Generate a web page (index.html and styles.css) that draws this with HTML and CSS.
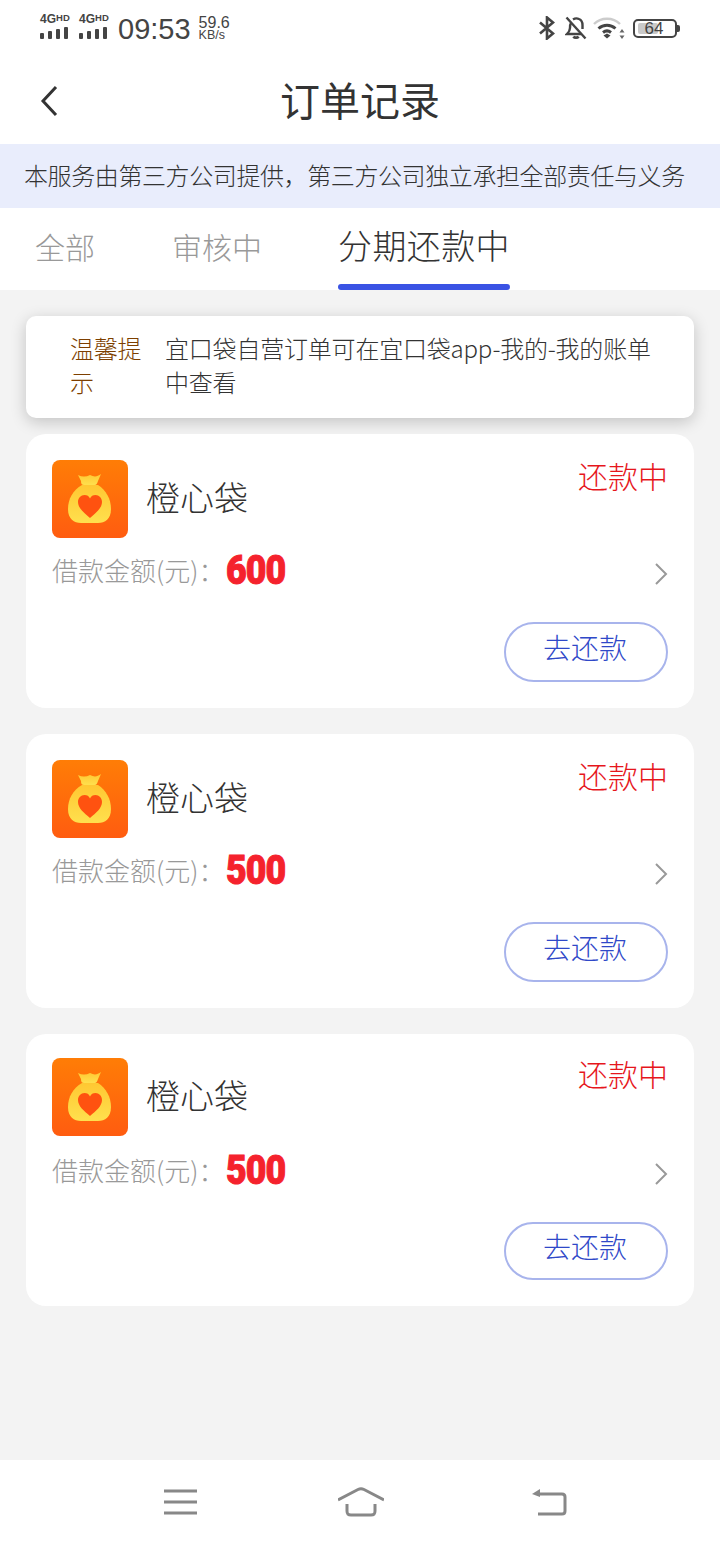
FILE: index.html
```html
<!DOCTYPE html>
<html lang="zh">
<head>
    <meta charset="UTF-8">
    <meta name="viewport" content="width=device-width, initial-scale=1.0">
    <title>订单记录</title>
    <link rel="stylesheet" href="styles.css">
</head>
<body>
    <!-- icon sprite -->
    <svg class="sprite" aria-hidden="true">
        <defs>
            <linearGradient id="logo-bg" x1="0" y1="0" x2="0" y2="1">
                <stop offset="0" stop-color="#ff7d06"/>
                <stop offset="1" stop-color="#ff5c10"/>
            </linearGradient>
            <linearGradient id="bag-bg" x1="0" y1="0" x2="0" y2="1">
                <stop offset="0" stop-color="#ffc832"/>
                <stop offset="1" stop-color="#ffe04e"/>
            </linearGradient>
        </defs>
        <symbol id="logo" viewBox="0 0 76 78">
            <rect width="76" height="78" rx="8" fill="url(#logo-bg)"/>
            <path d="M26 15c4 2 8 2 12 0 4 2 7 2 11-1l-3 7c-1 3-2 4-3 4H32c-2 0-3-1-3-4z" fill="url(#bag-bg)"/>
            <path d="M30 25h16c8 5 13 14 13 24 0 10-6 14-13 14H29c-7 0-13-4-13-14 0-10 5-19 14-24z" fill="url(#bag-bg)"/>
            <path d="M38 58c-6-5-12-10-12-16 0-4 3-7 6.500-7 2.500 0 4.500 1 5.500 3.500 1-2.500 3-3.500 5.500-3.500 3.500 0 6.500 3 6.500 7 0 6-6 11-12 16z" fill="#ff5210"/>
        </symbol>
        <symbol id="chevron" viewBox="0 0 14 22">
            <path d="M2 1l10 10L2 21" fill="none" stroke="#999" stroke-width="2"/>
        </symbol>
        <symbol id="bars" viewBox="0 0 29 12">
            <rect x="0" y="6" width="4" height="6" rx="1"/>
            <rect x="8" y="4" width="4" height="8" rx="1"/>
            <rect x="16" y="2" width="4" height="10" rx="1"/>
            <rect x="24" y="0" width="4" height="12" rx="1"/>
        </symbol>
    </svg>

    <!-- status bar -->
    <div class="status-bar">
        <div class="signal">
            <div class="net"><span>4G<small>HD</small></span><svg class="bars"><use href="#bars"/></svg></div>
            <div class="net"><span>4G<small>HD</small></span><svg class="bars"><use href="#bars"/></svg></div>
        </div>
        <span class="clock">09:53</span>
        <div class="speed"><span>59.6</span><small>KB/s</small></div>
        <div class="status-icons">
            <svg width="16" height="24" viewBox="0 0 16 24" fill="none" stroke="#444" stroke-width="2.600">
                <path d="M1 6.500l13 11-6 5V1.500l6 5-13 11"/>
            </svg>
            <svg class="bell" width="22" height="24" viewBox="0 0 22 24" fill="none" stroke="#444" stroke-width="2.400">
                <path d="M6 7c-1 1.500-1 3-1 5 0 3-1 4-3 6h14M8 3.500c1.800-1.200 4-1.400 6-.5 2.500 1 3.500 3.500 3.500 6v4"/>
                <path d="M8.500 20.500c1 1.600 4 1.600 5 0" stroke-width="2.800"/>
                <path d="M1.500 1.500l19 21"/>
            </svg>
            <svg width="32" height="24" viewBox="0 0 32 24" fill="none">
                <path d="M1 8c7-7 19-7 26 0" stroke="#ccc" stroke-width="2.400"/>
                <path d="M5.500 12.500c5-4.500 12-4.500 17 0M10 16.500c2.500-2 5.500-2 8 0" stroke="#444" stroke-width="3"/>
                <path d="M10.500 19.500l3.500-2 3.500 2-3.500 3z" fill="#444"/>
                <path d="M29 13l-2.500 3.500h5zM29 23l-2.500-3.500h5z" fill="#666"/>
            </svg>
            <div class="battery">
                <div class="battery-level"></div>
                <span class="battery-text">64</span>
            </div>
        </div>
    </div>

    <!-- header -->
    <header class="nav">
        <svg class="nav-back" width="18" height="32" viewBox="0 0 18 32">
            <path d="M16 2L3 16l13 14" fill="none" stroke="#333" stroke-width="3"/>
        </svg>
        <h1>订单记录</h1>
    </header>

    <div class="banner">本服务由第三方公司提供，第三方公司独立承担全部责任与义务</div>

    <div class="tabs">
        <div class="tab">全部</div>
        <div class="tab">审核中</div>
        <div class="tab active">分期还款中</div>
    </div>

    <main class="content">
        <div class="tip">
            <div class="tip-title">温馨提示</div>
            <div class="tip-text">宜口袋自营订单可在宜口袋app-我的-我的账单中查看</div>
        </div>

        <div class="card">
            <div class="card-head">
                <svg class="logo"><use href="#logo"/></svg>
                <div class="name">橙心袋</div>
                <div class="state">还款中</div>
            </div>
            <div class="amount-row">
                <span class="label">借款金额(元)：</span>
                <span class="amount">600</span>
                <svg class="chevron"><use href="#chevron"/></svg>
            </div>
            <div class="card-foot"><a class="pay-btn">去还款</a></div>
        </div>

        <div class="card">
            <div class="card-head">
                <svg class="logo"><use href="#logo"/></svg>
                <div class="name">橙心袋</div>
                <div class="state">还款中</div>
            </div>
            <div class="amount-row">
                <span class="label">借款金额(元)：</span>
                <span class="amount">500</span>
                <svg class="chevron"><use href="#chevron"/></svg>
            </div>
            <div class="card-foot"><a class="pay-btn">去还款</a></div>
        </div>

        <div class="card card-last">
            <div class="card-head">
                <svg class="logo"><use href="#logo"/></svg>
                <div class="name">橙心袋</div>
                <div class="state">还款中</div>
            </div>
            <div class="amount-row">
                <span class="label">借款金额(元)：</span>
                <span class="amount">500</span>
                <svg class="chevron"><use href="#chevron"/></svg>
            </div>
            <div class="card-foot"><a class="pay-btn">去还款</a></div>
        </div>
    </main>

    <!-- system navigation -->
    <footer class="sys-nav">
        <svg class="sys-menu" width="34" height="28" viewBox="0 0 34 28" stroke="#888" stroke-width="3" fill="none">
            <path d="M0 3h33M0 14h33M0 25h33"/>
        </svg>
        <svg class="sys-home" width="46" height="30" viewBox="1 0 46 30" stroke="#888" stroke-width="3" fill="none">
            <path d="M1 13L21 2.500c2-1 4-1 6 0L47 13M10 17v7c0 3 1 4 4 4h20c3 0 4-1 4-4v-7"/>
        </svg>
        <svg width="36" height="28" viewBox="0 0 36 28" fill="none">
            <path d="M6 6h24c2 0 3 1 3 3v14c0 2-1 3-3 3H6" stroke="#888" stroke-width="3"/>
            <path d="M0 6l8-5v8z" fill="#888"/>
        </svg>
    </footer>
</body>
</html>
```

FILE: styles.css
```css
body {
    margin: 0;
    height: 1544px;
    display: flex;
    flex-direction: column;
    background-color: #f3f3f3;
    font-family: "Noto Sans CJK SC", "Noto Sans", sans-serif;
    color: #333;
    overflow: hidden;
}

.sprite {
    position: absolute;
    width: 0;
    height: 0;
}

/* status bar */
.status-bar {
    height: 56px;
    box-sizing: border-box;
    padding: 0 40px;
    display: flex;
    align-items: center;
    background-color: #fff;
    color: #444;
    font-family: "Liberation Sans", sans-serif;
}

.signal {
    display: flex;
    gap: 9px;
    margin-top: -6px;
}

.net {
    width: 30px;
    display: flex;
    flex-direction: column;
    gap: 1px;
}

.net span {
    font-size: 12px;
    line-height: 13px;
    font-weight: bold;
    white-space: nowrap;
}

.net small {
    font-size: 9.500px;
    vertical-align: 2px;
}

.bars {
    width: 29px;
    height: 12px;
    fill: #444;
}

.clock {
    font-size: 29px;
    margin-left: 9px;
    margin-top: 3px;
}

.speed {
    margin-left: 8px;
    display: flex;
    flex-direction: column;
    margin-top: 1px;
}

.speed span {
    font-size: 16px;
    line-height: 14px;
}

.speed small {
    font-size: 12.500px;
    line-height: 11px;
}

.status-icons {
    margin-left: auto;
    display: flex;
    align-items: center;
    gap: 8px;
    margin-right: 3px;
}

.bell {
    margin-left: 2px;
    margin-right: -2px;
}

.battery {
    position: relative;
    width: 44px;
    height: 19px;
    border: 2px solid #444;
    border-radius: 5px;
    display: flex;
    padding: 2px 3px;
    box-sizing: border-box;
}

.battery::after {
    content: "";
    position: absolute;
    right: -5px;
    top: 4px;
    width: 3px;
    height: 7px;
    background-color: #444;
    border-radius: 0 2px 2px 0;
}

.battery-level {
    width: 60%;
    background-color: #c9c9c9;
    border-radius: 2px;
}

.battery-text {
    position: absolute;
    left: 0;
    right: 2px;
    top: -1px;
    text-align: center;
    font-size: 17px;
    line-height: 17px;
    color: #444;
}

/* header */
.nav {
    height: 88px;
    box-sizing: border-box;
    padding-bottom: 2px;
    display: flex;
    align-items: center;
    justify-content: center;
    position: relative;
    background-color: #fff;
}

.nav-back {
    position: absolute;
    left: 40px;
    top: 29px;
}

.nav h1 {
    margin: 0;
    font-size: 40px;
    font-weight: 400;
    color: #333;
}

.banner {
    height: 64px;
    box-sizing: border-box;
    padding: 0 0 4px 24px;
    display: flex;
    align-items: center;
    background-color: #e9edfc;
    font-size: 24px;
    font-weight: 300;
    letter-spacing: -0.4px;
    color: #333;
    white-space: nowrap;
}

/* tabs */
.tabs {
    height: 82px;
    box-sizing: border-box;
    padding-left: 35px;
    display: flex;
    gap: 77px;
    background-color: #fff;
}

.tab {
    font-size: 30px;
    line-height: 76px;
    color: #999;
    font-weight: 300;
}

.tab.active {
    position: relative;
    margin-left: -1px;
    font-size: 34px;
    line-height: 74px;
    letter-spacing: 0.4px;
    color: #333;
    font-weight: 300;
}

.tab.active::after {
    content: "";
    position: absolute;
    left: 0;
    right: 0;
    bottom: 0;
    height: 6px;
    border-radius: 3px;
    background-color: #3a53e4;
}

/* content */
.content {
    padding: 26px 26px 0;
    display: flex;
    flex-direction: column;
}

.tip {
    height: 102px;
    box-sizing: border-box;
    padding: 15px 30px 0 44px;
    display: flex;
    gap: 23px;
    background-color: #fff;
    border-radius: 10px;
    box-shadow: 0 4px 16px rgba(0, 0, 0, 0.2);
    font-size: 24px;
    line-height: 34px;
    font-weight: 300;
    margin-bottom: 16px;
}

.tip-title {
    width: 72px;
    flex-shrink: 0;
    color: #7d3f00;
    letter-spacing: -0.2px;
}

.tip-text {
    color: #333;
    letter-spacing: -0.2px;
    word-break: break-all;
}

.card {
    height: 274px;
    box-sizing: border-box;
    padding: 26px;
    margin-bottom: 26px;
    background-color: #fff;
    border-radius: 20px;
    display: flex;
    flex-direction: column;
}

.card-last {
    height: 272px;
    padding-top: 24px;
    margin-bottom: 0;
}

.card-head {
    display: flex;
    align-items: flex-start;
}

.logo {
    width: 76px;
    height: 78px;
    flex-shrink: 0;
}

.name {
    margin-left: 18px;
    font-size: 34px;
    line-height: 74px;
    font-weight: 300;
    color: #333;
}

.state {
    margin-left: auto;
    margin-top: -9px;
    font-size: 30px;
    line-height: 48px;
    color: #e6161c;
    font-weight: 300;
}

.amount-row {
    height: 40px;
    margin-top: 14px;
    display: flex;
    align-items: center;
}

.card-last .amount-row {
    margin-top: 16px;
}

.label {
    width: 174px;
    margin-top: -6px;
    font-size: 26px;
    color: #999;
    font-weight: 300;
    white-space: nowrap;
}

.amount {
    display: inline-block;
    font-family: Roboto, "Liberation Sans", sans-serif;
    font-size: 41px;
    line-height: 40px;
    font-weight: 900;
    letter-spacing: -1px;
    color: #f5222d;
    -webkit-text-stroke: 1px #f5222d;
    transform: scaleX(0.87);
    transform-origin: left center;
    margin-top: -4px;
}

.chevron {
    width: 14px;
    height: 22px;
    margin-left: auto;
    margin-top: 3px;
}

.card-foot {
    margin-top: auto;
    display: flex;
    justify-content: flex-end;
}

.pay-btn {
    width: 164px;
    height: 60px;
    box-sizing: border-box;
    border: 2px solid #a8b4ec;
    border-radius: 30px;
    padding: 0 2px 11px 0;
    display: flex;
    align-items: center;
    justify-content: center;
    font-size: 28px;
    font-weight: 300;
    color: #2f48c8;
}

.card-last .pay-btn {
    height: 58px;
}

/* bottom system bar */
.sys-nav {
    margin-top: auto;
    height: 84px;
    box-sizing: border-box;
    padding-left: 164px;
    display: flex;
    align-items: center;
    background-color: #fff;
}

.sys-menu {
    margin-right: 140px;
}

.sys-home {
    margin-right: 148px;
}
```
